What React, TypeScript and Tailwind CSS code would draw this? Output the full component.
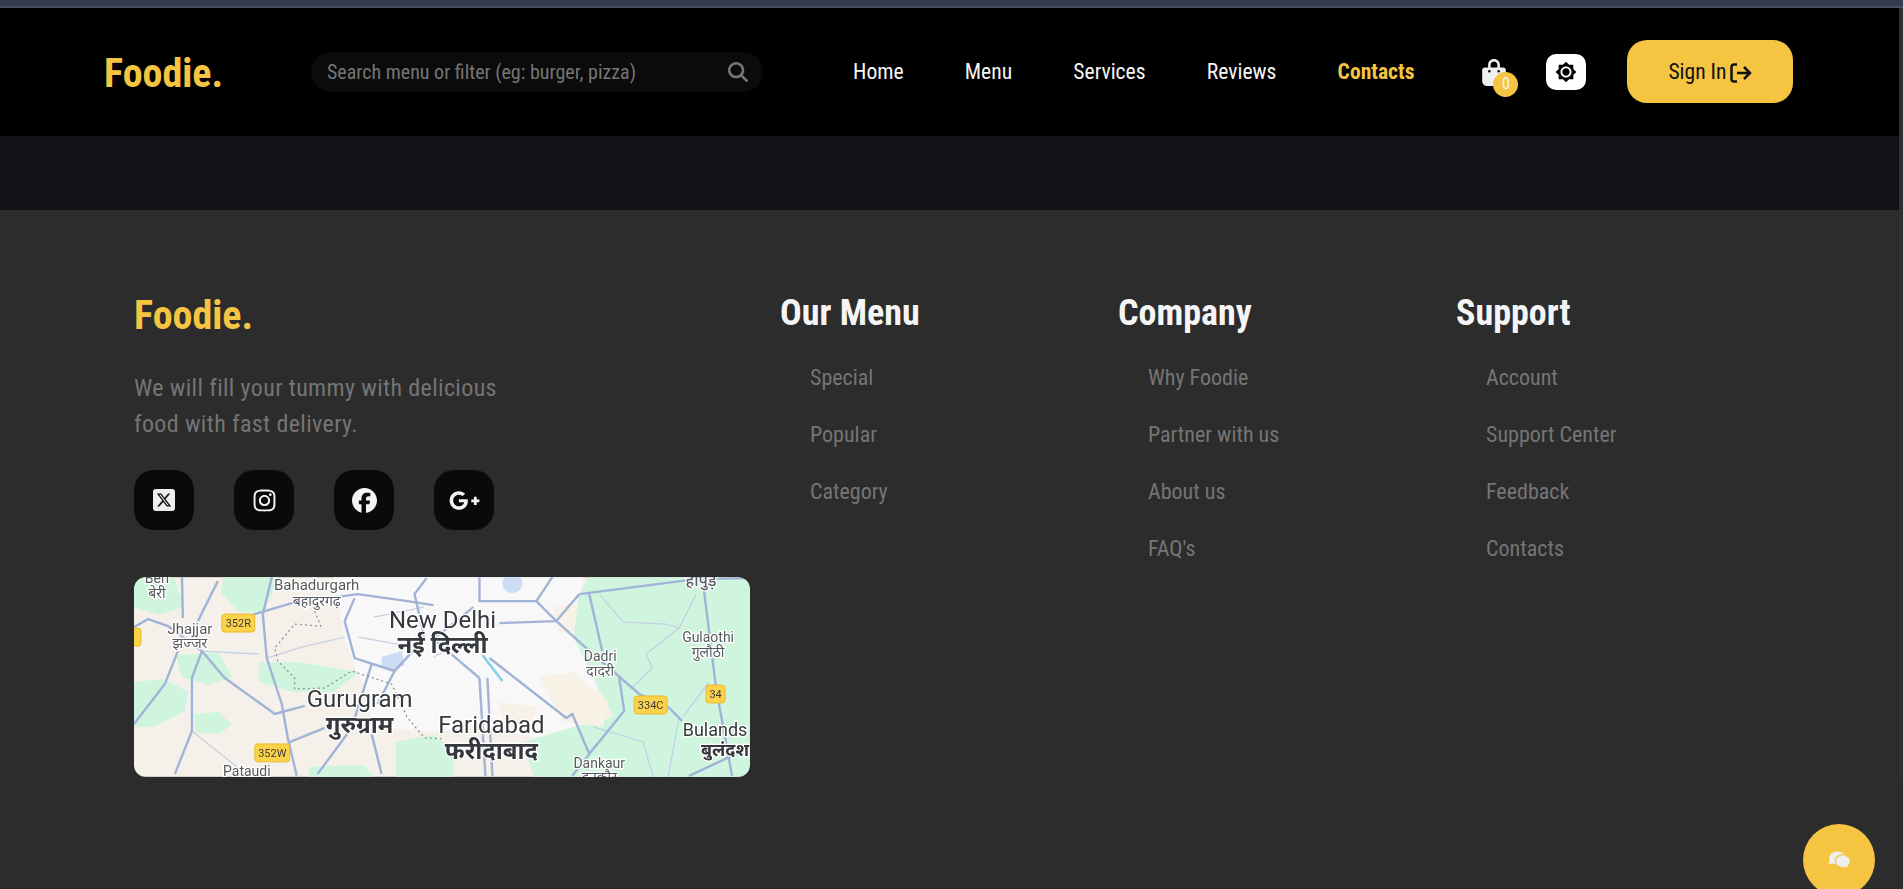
import { FaFacebook, FaGooglePlusG, FaInstagram, FaXTwitter, FaBagShopping, FaMagnifyingGlass } from "react-icons/fa6";
import { MdBrightness7 } from "react-icons/md";

const navLinks = [
  { name: "Home", className: "text-[#f5f5f5]" },
  { name: "Menu", className: "text-[#f5f5f5]" },
  { name: "Services", className: "text-[#f5f5f5]" },
  { name: "Reviews", className: "text-[#f5f5f5]" },
  { name: "Contacts", className: "text-[#f5c542] font-bold" },
];

const footerColumns = [
  { title: "Our Menu", links: ["Special", "Popular", "Category"] },
  { title: "Company", links: ["Why Foodie", "Partner with us", "About us", "FAQ's"] },
  { title: "Support", links: ["Account", "Support Center", "Feedback", "Contacts"] },
];

const greens = [
  "M90 0 H145 L130 35 L105 35 L87 15 Z",
  "M0 0 H40 L50 30 L25 38 L0 30 Z",
  "M42 78 L85 76 L98 100 L75 108 L48 100 Z",
  "M0 105 L30 102 L55 115 L50 135 L20 150 L0 150 Z",
  "M60 137 L85 135 L98 148 L85 157 L62 155 Z",
  "M125 85 L165 85 L225 95 L200 115 L160 115 L125 105 Z",
  "M262 165 L300 158 L320 175 L320 200 H262 Z",
  "M175 190 L230 188 L240 200 H175 Z",
  "M455 0 H617 V200 H400 L390 165 L440 150 L480 140 L460 100 L440 60 L445 20 Z",
];

const urban = "M200 0 H450 L440 60 L460 100 L475 150 L400 160 L340 150 L300 155 L240 150 L230 110 L210 60 Z";

const beiges = [
  "M406 100 L440 95 L475 125 L470 150 L430 145 Z",
  "M420 30 L445 25 L440 55 L425 55 Z",
  "M365 125 L405 130 L395 150 L370 145 Z",
];

const roads = [
  "M138 0 L129 37 L133 81 L148 127 L154 161 L163 199",
  "M88 52 L121 37 L158 26 L224 17 L274 24 L300 28",
  "M0 50 L14 42 L34 49 L68 74 L91 101 L141 137 L171 129",
  "M68 74 L58 101 L58 154 L41 197",
  "M0 147 L31 107 L44 74",
  "M48 0 L49 41",
  "M84 4 L64 44",
  "M154 166 L191 151",
  "M184 197 L218 151 L238 87",
  "M238 157 L248 197",
  "M221 21 L211 44 L221 81 L261 94 L291 61 L281 17 L293 1",
  "M261 94 L244 127",
  "M403 24 L423 44 L453 71 L483 97 L506 117 L536 131 L549 144",
  "M446 17 L423 44 L366 46",
  "M446 17 L563 2 L617 1",
  "M456 17 L469 74",
  "M486 101 L491 134 L456 177 L439 137 L433 141 L356 81",
  "M456 177 L439 199",
  "M571 14 L583 111 L599 199",
  "M616 171 L556 199",
  "M403 24 L346 24 L346 0",
  "M419 0 L403 24",
  "M354 101 L359 199",
  "M346 101 L352 199",
  "M340 30 L300 62 L346 101",
];

const minorRoads = [
  "M466 17 L490 45 L533 47 L546 51",
  "M563 17 L546 51 L513 77 L519 91 L499 111",
  "M58 154 L108 194",
  "M133 81 L168 70 L211 60",
  "M68 74 L125 77",
  "M240 40 L290 30",
  "M225 60 L280 70",
  "M300 80 L340 60",
  "M546 140 L535 200",
  "M576 105 L550 140",
  "M460 150 L510 165 L520 200",
];

const boundary =
  "M181 34 L187 49 L161 47 L141 71 L144 84 L161 101 L161 112 L191 111 L218 94 L258 107 L274 141 L291 161 L311 162";

const cityLabels = [
  { x: 309, y: 51, text: "New Delhi", size: 24, weight: 400 },
  { x: 309, y: 76, text: "नई दिल्ली", size: 24, weight: 700 },
  { x: 226, y: 130, text: "Gurugram", size: 24, weight: 400 },
  { x: 226, y: 156, text: "गुरुग्राम", size: 24, weight: 700 },
  { x: 358, y: 156, text: "Faridabad", size: 24, weight: 400 },
  { x: 358, y: 182, text: "फरीदाबाद", size: 24, weight: 700 },
  { x: 582, y: 159, text: "Bulands", size: 18, weight: 400 },
  { x: 592, y: 179, text: "बुलंदश", size: 18, weight: 700 },
  { x: 183, y: 13, text: "Bahadurgarh", size: 15, weight: 400 },
  { x: 183, y: 29, text: "बहादुरगढ़", size: 14, weight: 400 },
  { x: 56, y: 57, text: "Jhajjar", size: 15, weight: 400 },
  { x: 56, y: 71, text: "झज्जर", size: 14, weight: 400 },
  { x: 23, y: 6, text: "Beri", size: 14, weight: 400 },
  { x: 23, y: 21, text: "बेरी", size: 14, weight: 400 },
  { x: 467, y: 84, text: "Dadri", size: 14, weight: 400 },
  { x: 467, y: 99, text: "दादरी", size: 14, weight: 400 },
  { x: 575, y: 65, text: "Gulaothi", size: 14, weight: 400 },
  { x: 575, y: 80, text: "गुलौठी", size: 14, weight: 400 },
  { x: 568, y: 9, text: "हापुड़", size: 16, weight: 500 },
  { x: 466, y: 191, text: "Dankaur", size: 14, weight: 400 },
  { x: 466, y: 205, text: "दनकौर", size: 14, weight: 400 },
  { x: 113, y: 199, text: "Pataudi", size: 14, weight: 400 },
];

const shields = [
  { x: 88, y: 37, w: 33, h: 18, text: "352R" },
  { x: 121, y: 167, w: 35, h: 18, text: "352W" },
  { x: 501, y: 119, w: 33, h: 18, text: "334C" },
  { x: 573, y: 108, w: 19, h: 18, text: "34" },
  { x: -8, y: 51, w: 15, h: 18, text: "" },
];

// the map in the footer is a picture, so it is drawn
const MapPicture = () => (
  <svg
    viewBox="0 0 617 200"
    className="block w-full h-full blur-[0.4px] [font-stretch:100%] font-['Roboto','Noto_Sans',sans-serif]"
  >
    <rect width="617" height="200" fill="#f5f1ea" />
    <path d={urban} fill="#f8f8f9" />
    {greens.map((d) => (
      <path key={d} d={d} fill="#cff5de" />
    ))}
    {beiges.map((d) => (
      <path key={d} d={d} fill="#f8f1e6" />
    ))}
    <path d="M248 80 L268 74 L271 88 L258 94 L248 90 Z" fill="#cddcf5" />
    <ellipse cx="379" cy="6" rx="10" ry="10" fill="#cddcf5" />
    <path d="M349 78 L369 104" stroke="#7fd0e6" strokeWidth="2.5" fill="none" />
    {minorRoads.map((d) => (
      <path key={d} d={d} fill="none" stroke="#c6d0e4" strokeWidth="1.3" />
    ))}
    {roads.map((d) => (
      <path key={d} d={d} fill="none" stroke="#a1b3d6" strokeWidth="2.4" />
    ))}
    <path d={boundary} fill="none" stroke="#8a8a8a" strokeWidth="1.2" strokeDasharray="2 3" />
    {shields.map((s) => (
      <g key={s.x}>
        <rect x={s.x} y={s.y} width={s.w} height={s.h} rx="3" fill="#fbd34a" stroke="#eab92c" />
        <text x={s.x + s.w / 2} y={s.y + 13} textAnchor="middle" fontSize="11" fill="#3c3c3c">
          {s.text}
        </text>
      </g>
    ))}
    {cityLabels.map((c) => (
      <text
        key={c.text}
        x={c.x}
        y={c.y}
        textAnchor="middle"
        fontSize={c.size}
        fontWeight={c.weight}
        fill={c.size > 16 ? "#35383d" : "#55585d"}
        stroke="#ffffff"
        strokeWidth="2.5"
        paintOrder="stroke"
      >
        {c.text}
      </text>
    ))}
  </svg>
);

const SignInIcon = () => (
  <svg viewBox="0 0 22 20" className="w-[22px] h-[20px]" fill="none" stroke="currentColor" strokeWidth="2.5">
    <path d="M7 1.5 H4 a2.5 2.5 0 0 0 -2.5 2.5 V16 a2.5 2.5 0 0 0 2.5 2.5 H7" />
    <path d="M7 10 H20 M14 4 L20 10 L14 16" />
  </svg>
);

const ChatIcon = () => (
  <svg viewBox="0 0 24 18" className="w-[24px] h-[18px]">
    <path d="M1 13 L3 10 A8.5 6.5 0 1 1 6 12.5 Z" fill="#eeeeee" />
    <path
      d="M23 17 L21 15 A7.5 6.5 0 1 0 18 16.5 Z"
      fill="#eeeeee"
      stroke="#f5c542"
      strokeWidth="1.2"
    />
  </svg>
);

export default function App() {
  return (
    <div className="h-screen overflow-hidden relative bg-[#2c2c2c] font-['Roboto',sans-serif] [font-stretch:75%]">
      <div className="h-[8px] bg-[#333c4f] border-b-2 border-[#4a4f5c]" />

      <div className="flex">
        <div className="flex-1">
          {/* Header */}
          <header className="h-[128px] bg-black flex items-center pl-[104px]">
            <span className="w-[207px] mt-[3px] text-[40px] leading-none font-bold text-[#f5c542]">Foodie.</span>
            <div className="w-[452px] h-[40px] rounded-full bg-[#0b0b0b] flex items-center justify-between pl-4 pr-[15px]">
              <span className="text-[20px] text-[#757575]">Search menu or filter (eg: burger, pizza)</span>
              <FaMagnifyingGlass className="w-[20px] h-[20px] text-[#757575]" />
            </div>
            <nav className="ml-[90px] flex items-center gap-[61.2px] text-[21.6px]">
              {navLinks.map((link) => (
                <a key={link.name} className={link.className}>
                  {link.name}
                </a>
              ))}
            </nav>
            <div className="relative ml-[68px] w-[24px] h-[27px]">
              <FaBagShopping className="w-[24px] h-[27px] text-[#f0f0f0]" />
              <span className="absolute left-[11px] top-[13px] w-[25px] h-[25px] rounded-full bg-[#f5c542] text-[#f5f5f5] text-[16px] flex items-center justify-center">
                0
              </span>
            </div>
            <button className="ml-[40px] mb-[1px] w-[40px] h-[36px] rounded-[10px] bg-white flex items-center justify-center">
              <MdBrightness7 className="w-[22px] h-[22px] text-black" />
            </button>
            <button className="ml-[41px] mb-[1px] pt-[2px] w-[166px] h-[63px] rounded-[20px] bg-[#f5c542] flex items-center justify-center gap-1 text-[21.6px] text-[#111111]">
              Sign In
              <SignInIcon />
            </button>
          </header>

          <div className="h-[74px] bg-[#121317]" />

          {/* Footer */}
          <footer className="flex pl-[134px] pt-[75px]">
            <div className="w-[646px]">
              <div className="mt-[16px] text-[40px] leading-[30px] font-bold text-[#f5c542]">Foodie.</div>
              <p className="mt-[39px] w-[400px] text-[24px] leading-[36px] tracking-[0.36px] text-[#757575]">
                We will fill your tummy with delicious food with fast delivery.
              </p>
              <div className="mt-[28px] flex gap-[40px]">
                <a className="w-[60px] h-[60px] rounded-[20px] bg-[#0a0a0a] flex items-center justify-center">
                  <span className="w-[22px] h-[22px] rounded-[3px] bg-[#eeeeee] flex items-center justify-center">
                    <FaXTwitter className="w-[16px] h-[16px] text-[#111111]" />
                  </span>
                </a>
                <a className="w-[60px] h-[60px] rounded-[20px] bg-[#0a0a0a] flex items-center justify-center">
                  <FaInstagram className="w-[25px] h-[25px] text-[#f5f5f5]" />
                </a>
                <a className="w-[60px] h-[60px] rounded-[20px] bg-[#0a0a0a] flex items-center justify-center">
                  <FaFacebook className="w-[25px] h-[25px] text-[#f5f5f5]" />
                </a>
                <a className="w-[60px] h-[60px] rounded-[20px] bg-[#0a0a0a] flex items-center justify-center">
                  <FaGooglePlusG className="w-[31px] h-[31px] text-[#f5f5f5]" />
                </a>
              </div>
              <div className="mt-[47px] w-[616px] h-[200px] rounded-[12px] overflow-hidden">
                <MapPicture />
              </div>
            </div>
            {footerColumns.map((col) => (
              <div key={col.title} className="w-[338px]">
                <h3 className="mt-[1px] text-[36px] leading-[54px] font-bold text-[#f5f5f5]">{col.title}</h3>
                <ul className="mt-[21px] pl-[30px] flex flex-col gap-[24px]">
                  {col.links.map((link) => (
                    <li key={link} className="text-[22px] leading-[33px] text-[#757575]">
                      {link}
                    </li>
                  ))}
                </ul>
              </div>
            ))}
          </footer>
        </div>
        {/* Scrollbar edge */}
        <div className="w-[4px] bg-[#303030]" />
      </div>

      {/* Chat button */}
      <button className="absolute left-[1803px] top-[824px] w-[72px] h-[72px] rounded-full bg-[#f5c542] flex items-center justify-center">
        <ChatIcon />
      </button>
    </div>
  );
}
